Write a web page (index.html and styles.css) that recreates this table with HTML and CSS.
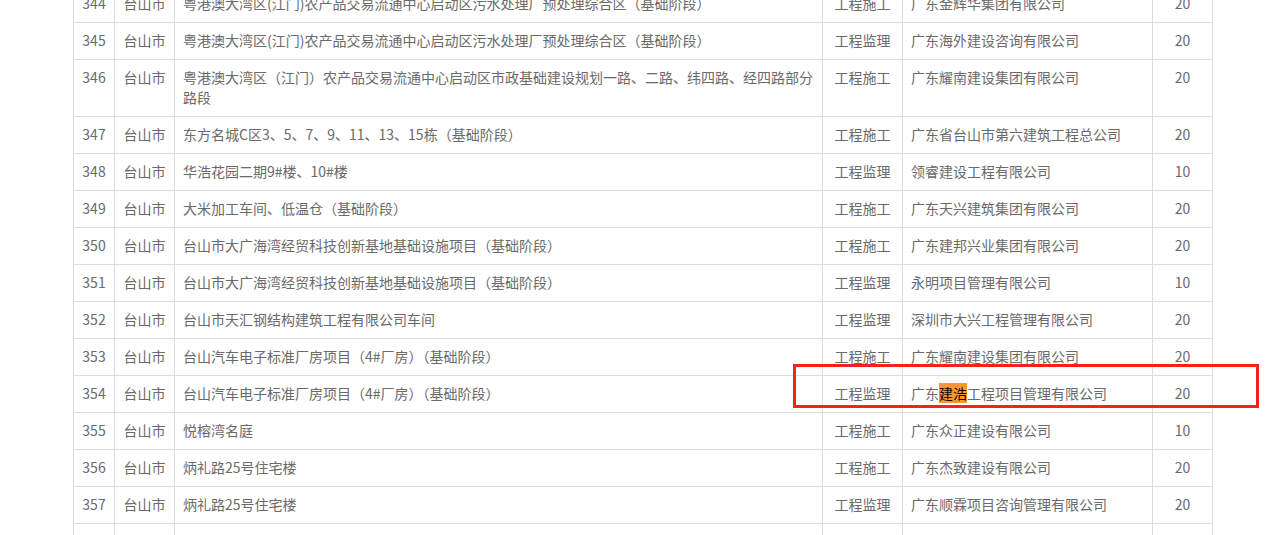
FILE: index.html
```html
<!DOCTYPE html>
<html lang="zh-CN">
<head>
<meta charset="utf-8">
<title>名单</title>
<link rel="stylesheet" href="styles.css">
</head>
<body>
<div class="page">
  <table class="list">
    <colgroup>
      <col class="c-no"><col class="c-city"><col class="c-name"><col class="c-type"><col class="c-co"><col class="c-score">
    </colgroup>
    <tbody>
      <tr><td class="ctr">344</td><td class="ctr">台山市</td><td>粤港澳大湾区(江门)农产品交易流通中心启动区污水处理厂预处理综合区（基础阶段）</td><td class="ctr">工程施工</td><td>广东金辉华集团有限公司</td><td class="ctr">20</td></tr>
      <tr><td class="ctr">345</td><td class="ctr">台山市</td><td>粤港澳大湾区(江门)农产品交易流通中心启动区污水处理厂预处理综合区（基础阶段）</td><td class="ctr">工程监理</td><td>广东海外建设咨询有限公司</td><td class="ctr">20</td></tr>
      <tr><td class="ctr">346</td><td class="ctr">台山市</td><td>粤港澳大湾区（江门）农产品交易流通中心启动区市政基础建设规划一路、二路、纬四路、经四路部分路段</td><td class="ctr">工程施工</td><td>广东耀南建设集团有限公司</td><td class="ctr">20</td></tr>
      <tr><td class="ctr">347</td><td class="ctr">台山市</td><td>东方名城C区3、5、7、9、11、13、15栋（基础阶段）</td><td class="ctr">工程施工</td><td>广东省台山市第六建筑工程总公司</td><td class="ctr">20</td></tr>
      <tr><td class="ctr">348</td><td class="ctr">台山市</td><td>华浩花园二期9#楼、10#楼</td><td class="ctr">工程监理</td><td>领睿建设工程有限公司</td><td class="ctr">10</td></tr>
      <tr><td class="ctr">349</td><td class="ctr">台山市</td><td>大米加工车间、低温仓（基础阶段）</td><td class="ctr">工程施工</td><td>广东天兴建筑集团有限公司</td><td class="ctr">20</td></tr>
      <tr><td class="ctr">350</td><td class="ctr">台山市</td><td>台山市大广海湾经贸科技创新基地基础设施项目（基础阶段）</td><td class="ctr">工程施工</td><td>广东建邦兴业集团有限公司</td><td class="ctr">20</td></tr>
      <tr><td class="ctr">351</td><td class="ctr">台山市</td><td>台山市大广海湾经贸科技创新基地基础设施项目（基础阶段）</td><td class="ctr">工程监理</td><td>永明项目管理有限公司</td><td class="ctr">10</td></tr>
      <tr><td class="ctr">352</td><td class="ctr">台山市</td><td>台山市天汇钢结构建筑工程有限公司车间</td><td class="ctr">工程监理</td><td>深圳市大兴工程管理有限公司</td><td class="ctr">20</td></tr>
      <tr><td class="ctr">353</td><td class="ctr">台山市</td><td>台山汽车电子标准厂房项目（4#厂房）（基础阶段）</td><td class="ctr">工程施工</td><td>广东耀南建设集团有限公司</td><td class="ctr">20</td></tr>
      <tr><td class="ctr">354</td><td class="ctr">台山市</td><td>台山汽车电子标准厂房项目（4#厂房）（基础阶段）</td><td class="ctr">工程监理</td><td>广东<span class="hit">建浩</span>工程项目管理有限公司</td><td class="ctr">20</td></tr>
      <tr><td class="ctr">355</td><td class="ctr">台山市</td><td>悦榕湾名庭</td><td class="ctr">工程施工</td><td>广东众正建设有限公司</td><td class="ctr">10</td></tr>
      <tr><td class="ctr">356</td><td class="ctr">台山市</td><td>炳礼路25号住宅楼</td><td class="ctr">工程施工</td><td>广东杰致建设有限公司</td><td class="ctr">20</td></tr>
      <tr><td class="ctr">357</td><td class="ctr">台山市</td><td>炳礼路25号住宅楼</td><td class="ctr">工程监理</td><td>广东顺霖项目咨询管理有限公司</td><td class="ctr">20</td></tr>
      <tr><td class="ctr">&nbsp;</td><td class="ctr"></td><td></td><td class="ctr"></td><td></td><td class="ctr"></td></tr>
    </tbody>
  </table>
  <div class="mark"></div>
</div>
</body>
</html>
```

FILE: styles.css
```css
html, body {
  margin: 0;
  padding: 0;
  background: #fff;
  overflow: hidden;
}
body {
  font-family: "Microsoft YaHei", "Noto Sans CJK SC", "Noto Sans", sans-serif;
  font-size: 14px;
  color: #6a6a6a;
}
.page {
  position: relative;
  padding-left: 73px;
  margin-top: -15px;
  height: 550px;
}
.list {
  border-collapse: collapse;
  table-layout: fixed;
  width: 1140px;
}
.c-no { width: 41px; }
.c-city { width: 60px; }
.c-name { width: 648px; }
.c-type { width: 80px; }
.c-co { width: 250px; }
.c-score { width: 60px; }
.list td {
  border: 1px solid #ddd;
  padding: 7px 8px 9px;
  line-height: 20px;
  vertical-align: top;
  text-align: left;
  word-break: break-all;
}
.list td.ctr {
  text-align: center;
  padding-left: 0;
  padding-right: 0;
}
.hit {
  background: #ff9632;
  color: #000;
}
.mark {
  position: absolute;
  left: 793px;
  top: 379px;
  width: 460px;
  height: 38px;
  border: 3px solid #f5221b;
}
```
